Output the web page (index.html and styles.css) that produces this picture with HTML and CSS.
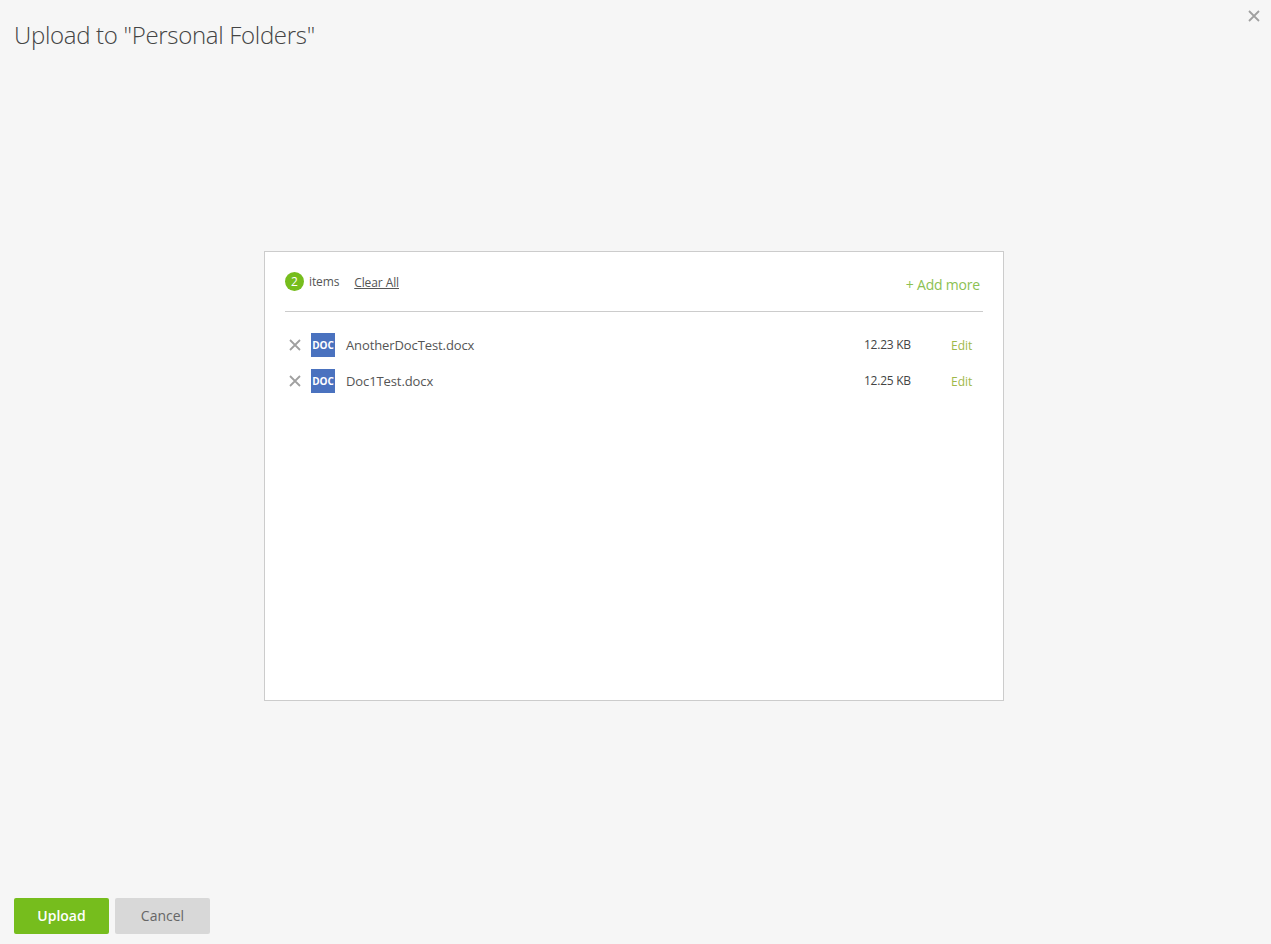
FILE: index.html
```html
<!DOCTYPE html>
<html lang="en">
<head>
<meta charset="utf-8">
<title>Upload</title>
<link rel="stylesheet" href="styles.css">
</head>
<body>
<div class="dialog">
  <header class="head">
    <h1 class="title">Upload to "Personal Folders"</h1>
    <button class="close" aria-label="Close"><svg width="12" height="12" viewBox="0 0 12 12"><path d="M1 1L11 11M11 1L1 11" class="x-stroke"/></svg></button>
  </header>
  <main class="main">
    <section class="panel">
      <div class="summary">
        <div class="count"><span class="badge">2</span><span class="items">items</span><a class="clear">Clear All</a></div>
        <a class="add">+ Add more</a>
      </div>
      <ul class="files">
        <li class="file">
          <svg class="remove" width="12" height="12" viewBox="0 0 12 12"><path d="M1 1L11 11M11 1L1 11" class="x-stroke"/></svg>
          <span class="doc">DOC</span>
          <span class="name">AnotherDocTest.docx</span>
          <span class="size">12.23 KB</span>
          <a class="edit">Edit</a>
        </li>
        <li class="file">
          <svg class="remove" width="12" height="12" viewBox="0 0 12 12"><path d="M1 1L11 11M11 1L1 11" class="x-stroke"/></svg>
          <span class="doc">DOC</span>
          <span class="name">Doc1Test.docx</span>
          <span class="size">12.25 KB</span>
          <a class="edit">Edit</a>
        </li>
      </ul>
    </section>
  </main>
  <footer class="foot">
    <button class="btn primary">Upload</button>
    <button class="btn secondary">Cancel</button>
  </footer>
</div>
</body>
</html>
```
FILE: styles.css
```css
* { box-sizing: border-box; }
html, body { margin: 0; height: 100%; }
body { background: #f6f6f6; font-family: "Open Sans", "Noto Sans", sans-serif; color: #555; overflow: hidden; }
.dialog { height: 944px; display: flex; flex-direction: column; }
.head { height: 251px; flex: none; display: flex; justify-content: space-between; align-items: flex-start; padding: 18px 11px 0 14px; }
.title { margin: 0; font-size: 24px; line-height: 34px; font-weight: 300; color: #444; letter-spacing: -0.31px; }
.close { margin: -8px 0 0; padding: 0; border: 0; background: none; width: 12px; height: 12px; display: block; }
.close svg { display: block; }
.x-stroke { stroke: #a0a0a0; stroke-width: 1.8; fill: none; }
.main { flex: none; height: 450px; padding-left: 264px; }
.panel { width: 740px; height: 450px; background: #fff; border: 1px solid #ccc; padding: 20px 20px 0 20px; }
.summary { height: 40px; display: flex; justify-content: space-between; align-items: flex-start; border-bottom: 1px solid #ccc; width: 698px; }
.count { display: flex; align-items: center; height: 19px; }
.badge { width: 19px; height: 19px; border-radius: 50%; background: #76bd1d; color: #fff; font-size: 12px; line-height: 19px; text-align: center; }
.items { font-size: 12px; margin: -1px 0 0 5px; color: #555; letter-spacing: -0.13px; }
.clear { font-size: 12px; margin: 1px 0 0 15px; color: #555; text-decoration: underline; letter-spacing: -0.1px; }
.add { font-size: 14px; color: #8cc152; margin-top: 3px; margin-right: 3px; line-height: 20px; letter-spacing: -0.2px; }
.files { list-style: none; margin: 0; padding: 15px 0 0; }
.file { height: 36px; display: flex; align-items: center; font-size: 13px; }
.remove { margin-left: 4px; flex: none; }
.doc { width: 24px; height: 24px; margin-left: 10px; background: #4a72bf; color: #fff; font-size: 10px; font-weight: 700; line-height: 24px; text-align: center; flex: none; letter-spacing: -0.1px; }
.name { margin-left: 11px; flex: 1; color: #555; letter-spacing: -0.1px; }
.size { font-size: 12px; color: #444; width: 87px; letter-spacing: -0.25px; margin-top: -1px; }
.edit { font-size: 12px; color: #9fb84a; width: 32px; }
.foot { flex: 1; display: flex; align-items: flex-start; gap: 6px; padding: 197px 0 0 14px; }
.btn { width: 95px; height: 36px; border: 0; border-radius: 2px; font-family: inherit; font-size: 14px; padding: 0 0 2px; }
.primary { background: #76bd1d; color: #fff; font-weight: 600; }
.secondary { background: #d8d8d8; color: #666; }
```
